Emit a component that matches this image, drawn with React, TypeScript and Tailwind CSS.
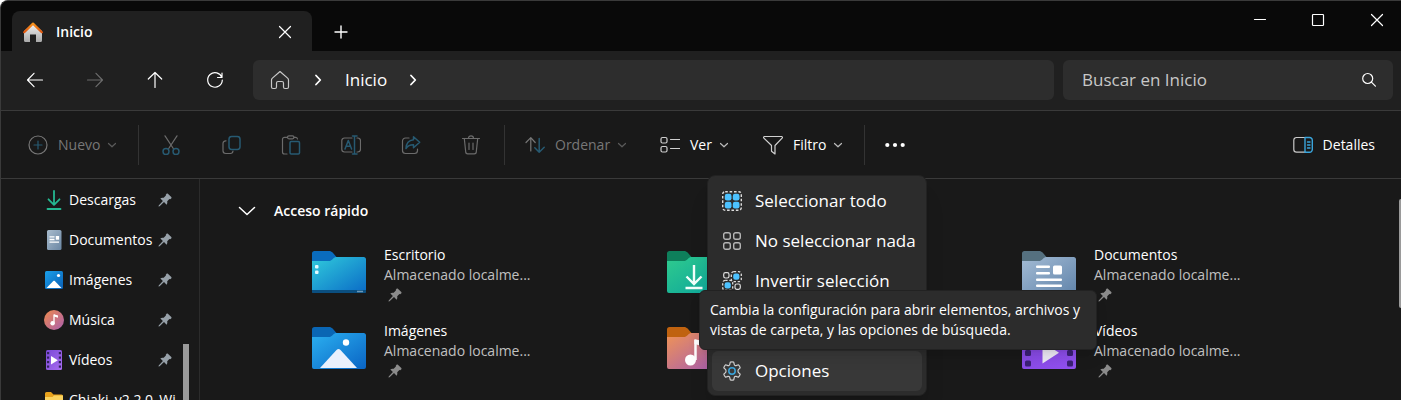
import type { ReactNode } from "react";

type IconProps = { className?: string };

const stroke = {
  fill: "none",
  stroke: "currentColor",
  strokeWidth: 1.2,
  strokeLinecap: "round",
  strokeLinejoin: "round",
} as const;

function Icon({ children, className = "" }: { children: ReactNode; className?: string }) {
  return (
    <svg viewBox="0 0 20 20" className={`size-5 shrink-0 ${className}`} aria-hidden="true" {...stroke}>
      {children}
    </svg>
  );
}

const DIM = "#275a72";
const BLUE = "#4cc2ff";

function HomeColor() {
  return (
    <svg viewBox="0 0 20 20" className="size-5 shrink-0" aria-hidden="true">
      <defs>
        <linearGradient id="wall" x1="0" y1="0" x2="0" y2="1">
          <stop offset="0" stopColor="#f3f3f3" />
          <stop offset="1" stopColor="#a9a9a9" />
        </linearGradient>
        <linearGradient id="roof" x1="0" y1="0" x2="0" y2="1">
          <stop offset="0" stopColor="#f7931e" />
          <stop offset="1" stopColor="#e0560f" />
        </linearGradient>
      </defs>
      <path d="M1 9 10 1.500 19 9v9.500a1.500 1.500 0 0 1-1.500 1.500H13v-7.500H7V20H2.500A1.500 1.500 0 0 1 1 18.500z" fill="url(#wall)" />
      <path d="M1.200 10.200 10 1.600l8.800 8.600" fill="none" stroke="url(#roof)" strokeWidth="2.200" strokeLinecap="round" strokeLinejoin="round" />
    </svg>
  );
}

const Close = () => <Icon><path d="m4.500 4.500 11 11m0-11-11 11" /></Icon>;
const Plus = () => <Icon><path d="M10 4v12M4 10h12" strokeWidth="1.400" /></Icon>;
const Minimize = () => <Icon><path d="M4.500 9.500h11" /></Icon>;
const Maximize = () => <Icon><rect x="4.500" y="4.500" width="11" height="11" rx="0.800" /></Icon>;
const Back = () => <Icon><path d="M17.500 10h-15M9 3.300 2.500 10 9 16.700" /></Icon>;
const Forward = () => <Icon><path d="M2.500 10h15M11 3.300 17.500 10 11 16.700" /></Icon>;
const Up = () => <Icon><path d="M10 17.500v-15M3.300 9 10 2.500 16.700 9" /></Icon>;
const Refresh = () => (
  <Icon><path d="M16.900 7.500A7.300 7.300 0 1 0 17.300 10M17 3v4.500h-4.500" /></Icon>
);
const Home = () => (
  <Icon className="text-[#c9c9c9]">
    <path d="m10 1.500 7.600 6.600c.6.500.9 1.200.9 1.900v7a1.500 1.500 0 0 1-1.500 1.500h-2a1.500 1.500 0 0 1-1.500-1.500v-4A1.500 1.500 0 0 0 12 11.500H8A1.500 1.500 0 0 0 6.500 13v4A1.500 1.500 0 0 1 5 18.500H3A1.500 1.500 0 0 1 1.500 17v-7c0-.7.3-1.400.9-1.900z" />
  </Icon>
);
const Crumb = () => <Icon><path d="m8 5.500 4.300 4.500L8 14.500" strokeWidth="1.800" /></Icon>;
const Search = () => (
  <Icon><circle cx="8.700" cy="8.500" r="5" /><path d="m12.400 12.200 4 4" /></Icon>
);
const Chevron = () => (
  <svg viewBox="0 0 10 10" className="size-[10px] shrink-0 opacity-70" aria-hidden="true" {...stroke}>
    <path d="m1.500 3.500 3.500 3.300 3.500-3.300" />
  </svg>
);
const NewIcon = () => (
  <Icon><circle cx="10" cy="10" r="9" /><path d="M10 6v8M6 10h8" stroke={DIM} /></Icon>
);
const Cut = () => (
  <Icon>
    <path d="m4 .800 8.300 12.700M16 .800 7.700 13.500" />
    <g stroke={DIM} strokeWidth="1.500"><circle cx="5" cy="16.500" r="3" /><circle cx="15" cy="16.500" r="3" /></g>
  </Icon>
);
const Copy = () => (
  <Icon>
    <path d="M5 5.800A2.700 2.700 0 0 0 2 8.500v7.300A2.700 2.700 0 0 0 4.700 18.500h4.600A2.700 2.700 0 0 0 12 16" />
    <rect x="8" y="1.500" width="11" height="13" rx="2.700" stroke={DIM} strokeWidth="1.500" />
  </Icon>
);
const Paste = () => (
  <Icon>
    <path d="M6.500 2.300h-3A2 2 0 0 0 1.500 4.300V17a2 2 0 0 0 2 2H6M13 2.300h1.800a2 2 0 0 1 1.700 1.700" />
    <rect x="6.500" y=".800" width="6.500" height="3" rx="1.500" />
    <rect x="9" y="6.500" width="9.500" height="12.500" rx="1.200" stroke={DIM} strokeWidth="1.500" />
  </Icon>
);
const Rename = () => (
  <Icon>
    <path d="M11 3H3.500A2.700 2.700 0 0 0 .800 5.700v8.600A2.700 2.700 0 0 0 3.500 17H11M16 3h.800a2.700 2.700 0 0 1 2.700 2.700v8.600a2.700 2.700 0 0 1-2.700 2.700H16" />
    <path d="m4 14 3.300-8.500L10.600 14M5 11.300h4.600M13.500 1v18M11.500 1h4.500M11.500 19h4.500" stroke={DIM} strokeWidth="1.500" />
  </Icon>
);
const Share = () => (
  <Icon>
    <path d="M8 3H4.500A3 3 0 0 0 1.500 6v9.500a3 3 0 0 0 3 3h9a3 3 0 0 0 3-3V14" />
    <path d="m12.500 1.800 6.200 5.500-6.200 5.500V9.800c-3.800-.1-5.800 1-7.500 3.700.2-5.200 2.800-8.200 7.500-8.700z" stroke={DIM} strokeWidth="1.500" />
  </Icon>
);
const Trash = () => (
  <Icon>
    <path d="M1.500 3.500h17M7.500 3.300a2.500 2.500 0 0 1 5 0M3.300 3.500l1.400 13.300A2 2 0 0 0 6.700 18.800h6.600a2 2 0 0 0 2-2l1.400-13.300M8 8v6.500M12 8v6.500" />
  </Icon>
);
const Sort = () => (
  <Icon>
    <path d="M5.800 16V2.800M1 7.500l4.800-4.800 4.400 4.800" />
    <path d="M14.200 3.500v13.700M9.800 12.800l4.400 4.400 5-5" stroke={DIM} strokeWidth="1.500" />
  </Icon>
);
const ViewIcon = () => (
  <Icon className="text-[#d0d0d0]">
    <rect x="1" y="2.500" width="6" height="5.500" rx="1.500" /><rect x="1" y="11.500" width="6" height="5.500" rx="1.500" />
    <path d="M10.500 4.500h9M10.500 13.500h9" />
  </Icon>
);
const Filter = () => (
  <Icon className="text-[#d0d0d0]">
    <path d="M1.500 1.500h17c.9 0 1.200 1 .6 1.600L12 10.500V19l-3.500-2.800v-5.700L.900 3.100c-.6-.6-.3-1.600.6-1.600z" />
  </Icon>
);
const Dots = () => (
  <svg viewBox="0 0 20 20" className="size-5" fill="currentColor" aria-hidden="true">
    <circle cx="2.300" cy="10" r="2.100" /><circle cx="10" cy="10" r="2.100" /><circle cx="17.700" cy="10" r="2.100" />
  </svg>
);
const Details = () => (
  <Icon className="text-[#c9c9c9]">
    <path d="M12 2.500H3.500A2.700 2.700 0 0 0 .800 5.200v9.300a2.700 2.700 0 0 0 2.700 2.700H12" />
    <path d="M12 2.500h4.600a2.700 2.700 0 0 1 2.700 2.700v9.300a2.700 2.700 0 0 1-2.700 2.700H12zM14.500 7h2.500M14.500 10h2.500M14.500 13h2.500" stroke="#3aa5dc" strokeWidth="1.400" />
  </Icon>
);

const SelectAll = () => (
  <Icon className="text-[#dddddd]">
    <rect x=".700" y=".700" width="18.600" height="18.600" rx="2.500" strokeDasharray="2.600 1.800" strokeWidth="1.400" strokeLinecap="butt" />
    <g fill={BLUE} stroke="none">
      <rect x="2.800" y="2.800" width="6.700" height="6.700" rx="2.200" /><rect x="10.800" y="2.800" width="6.700" height="6.700" rx="2.200" />
      <rect x="2.800" y="10.800" width="6.700" height="6.700" rx="2.200" /><rect x="10.800" y="10.800" width="6.700" height="6.700" rx="2.200" />
    </g>
  </Icon>
);
const SelectNone = () => (
  <Icon className="text-[#b5b5b5]">
    <g strokeWidth="1.400">
      <rect x="1.700" y="1.700" width="6.600" height="6.600" rx="2" /><rect x="11.700" y="1.700" width="6.600" height="6.600" rx="2" />
      <rect x="1.700" y="11.700" width="6.600" height="6.600" rx="2" /><rect x="11.700" y="11.700" width="6.600" height="6.600" rx="2" />
    </g>
  </Icon>
);
const Invert = () => (
  <Icon className="text-[#dddddd]">
    <rect x="1.700" y="1.700" width="5.300" height="5.300" rx="1.700" /><rect x="13" y="13" width="5.300" height="5.300" rx="1.700" />
    <g strokeDasharray="2.400 1.700" strokeLinecap="butt" strokeWidth="1.300">
      <rect x="9.300" y=".700" width="10" height="10" rx="2.500" /><rect x=".700" y="9.300" width="10" height="10" rx="2.500" />
    </g>
    <g fill={BLUE} stroke="none"><rect x="11.200" y="2.600" width="6.200" height="6.200" rx="2.200" /><rect x="2.600" y="11.200" width="6.200" height="6.200" rx="2.200" /></g>
  </Icon>
);
const Gear = () => (
  <Icon className="text-[#d0d0d0]">
    <path d="M8.300 1.200C9.400.900 10.600.900 11.700 1.200L12.300 3.700C12.400 4.200 13.400 4.800 14 4.600L16.500 3.800C17.300 4.700 17.900 5.700 18.200 6.800L16.300 8.700C15.900 9.100 15.900 10.900 16.300 11.300L18.200 13.200C17.900 14.300 17.300 15.300 16.500 16.200L14 15.400C13.400 15.200 12.400 15.800 12.300 16.300L11.700 18.800C10.600 19.100 9.400 19.100 8.300 18.800L7.700 16.300C7.600 15.800 6.600 15.200 6 15.400L3.500 16.200C2.700 15.300 2.100 14.300 1.800 13.200L3.700 11.300C4.100 10.900 4.100 9.100 3.700 8.700L1.800 6.800C2.100 5.700 2.700 4.700 3.500 3.800L6 4.600C6.600 4.800 7.600 4.200 7.700 3.700z" />
    <circle cx="10" cy="10" r="3.200" stroke="#3aa5dc" strokeWidth="1.500" />
  </Icon>
);

function Pin({ className = "" }: IconProps) {
  return (
    <svg viewBox="0 0 14 14" className={`size-[14px] shrink-0 ${className}`} fill="currentColor" aria-hidden="true">
      <path d="M8.600.800c.4-.5.900-.5 1.300-.1l3.400 3.400c.4.400.4.900-.1 1.300l-1 .8-.8-.1-2.200 2.200c.3 1.300.1 2.400-.6 3.400L6 9.100 1.600 13.300.500 13.500l.2-1.100L4.900 8 2.300 5.400c1-.7 2.100-.900 3.400-.6l2.200-2.200-.1-.8z" />
    </svg>
  );
}

const SideDownload = () => (
  <svg viewBox="0 0 20 20" className="size-5 shrink-0" fill="none" stroke="#25b891" strokeWidth="1.800" strokeLinecap="round" strokeLinejoin="round" aria-hidden="true">
    <path d="M10 1v13.500M4.500 9.300 10 14.800l5.500-5.500M3.500 19h13" />
  </svg>
);
const SideDocument = () => (
  <svg viewBox="0 0 20 20" className="size-5 shrink-0" aria-hidden="true">
    <defs><linearGradient id="sdoc" x1="0" y1="0" x2="1" y2="1"><stop stopColor="#a9bccd" /><stop offset="1" stopColor="#6a86a3" /></linearGradient></defs>
    <rect x="3" width="14.500" height="20" rx="1.500" fill="url(#sdoc)" />
    <path d="M5.500 6.800h5M5.500 9.500h5M5.500 12.200h9.500" stroke="#fff" strokeWidth="1.300" />
    <rect x="11.800" y="6" width="3.300" height="3.700" fill="#fff" />
  </svg>
);
const SidePicture = () => (
  <svg viewBox="0 0 20 20" className="size-5 shrink-0" aria-hidden="true">
    <defs><linearGradient id="spic" x1="0" y1="0" x2="1" y2="1"><stop stopColor="#1aa0ea" /><stop offset="1" stopColor="#0a5fb5" /></linearGradient></defs>
    <rect x="1" y="1" width="18" height="18" rx="1.500" fill="url(#spic)" />
    <path d="M2.500 18 9.300 11c.5-.5 1-.5 1.500 0L17.500 18z" fill="#fff" />
    <circle cx="14.500" cy="5.500" r="1.600" fill="#fff" />
  </svg>
);
const SideMusic = () => (
  <svg viewBox="0 0 20 20" className="size-5 shrink-0" aria-hidden="true">
    <defs><linearGradient id="smus" x1="0" y1="0" x2="1" y2="1"><stop stopColor="#ee8a4c" /><stop offset="1" stopColor="#ab5fb0" /></linearGradient></defs>
    <circle cx="10" cy="10" r="10" fill="url(#smus)" />
    <path d="M10 4.500v9" stroke="#fff" strokeWidth="1.300" /><path d="M10 4.300 14 5.500v2.200L10 6.500z" fill="#fff" />
    <circle cx="8.600" cy="13.300" r="2.200" fill="#fff" />
  </svg>
);
const SideVideo = () => (
  <svg viewBox="0 0 20 20" className="size-5 shrink-0" aria-hidden="true">
    <defs><linearGradient id="svid" x1="0" y1="0" x2="1" y2="1"><stop stopColor="#7a49d6" /><stop offset="1" stopColor="#a86cf0" /></linearGradient></defs>
    <rect x="2" width="16" height="20" rx="1.500" fill="url(#svid)" />
    <g fill="#33235e">
      <rect x="3" y="2" width="2.200" height="2.200" /><rect x="3" y="6.500" width="2.200" height="2.200" /><rect x="3" y="11" width="2.200" height="2.200" /><rect x="3" y="15.500" width="2.200" height="2.200" />
      <rect x="14.800" y="2" width="2.200" height="2.200" /><rect x="14.800" y="6.500" width="2.200" height="2.200" /><rect x="14.800" y="11" width="2.200" height="2.200" /><rect x="14.800" y="15.500" width="2.200" height="2.200" />
    </g>
    <path d="M7 6v8.500l6.800-4.200z" fill="#fff" />
  </svg>
);
const SideFolder = () => (
  <svg viewBox="0 0 20 20" className="size-5 shrink-0" aria-hidden="true">
    <path d="M1 3.500A1.500 1.500 0 0 1 2.500 2H7l2.500 2.500h8A1.500 1.500 0 0 1 19 6v4H1z" fill="#e8a21c" />
    <path d="M1 7h7.500L10 5.500h9V17a1.500 1.500 0 0 1-1.500 1.500h-15A1.500 1.500 0 0 1 1 17z" fill="#fbd35f" />
  </svg>
);

type FolderKind = "desktop" | "downloads" | "documents" | "pictures" | "music" | "videos";

const folderColors: Record<FolderKind, [string, string, string]> = {
  desktop: ["#0a6cbd", "#30cbdc", "#0a6ac6"],
  downloads: ["#0e7f5b", "#2fcb8e", "#0ba39b"],
  documents: ["#55707f", "#a3bbd4", "#6285ab"],
  pictures: ["#0a66b4", "#2bb0f0", "#0a64c4"],
  music: ["#c0620f", "#f09455", "#a45ab4"],
  videos: ["#5b2bb0", "#8347e0", "#9250f0"],
};

const folderArt: Record<FolderKind, ReactNode> = {
  desktop: (
    <>
      <path d="M0 39h54v1.500a1.500 1.500 0 0 1-1.500 1.500h-51A1.500 1.500 0 0 1 0 40.500z" fill="#0b4f80" />
      <rect x="3" y="14" width="3.500" height="3.500" rx="1" fill="#e2fbff" /><rect x="3" y="19.500" width="3.500" height="3.500" rx="1" fill="#e2fbff" />
      <path d="M45 40.500h6" stroke="#6b98b8" strokeWidth="1.500" />
    </>
  ),
  downloads: <path d="M27 14v18M19.500 25.500 27 33l7.500-7.500M18.500 37h17" fill="none" stroke="#f2fffb" strokeWidth="2.400" />,
  documents: (
    <g fill="#fff">
      <rect x="14" y="14.500" width="14" height="2.500" rx="1" /><rect x="14" y="21" width="14" height="2.500" rx="1" />
      <rect x="14" y="27.500" width="26" height="2.500" rx="1" /><rect x="14" y="33.500" width="26" height="2.500" rx="1" />
      <rect x="31" y="14.500" width="9" height="9" rx="1.500" />
    </g>
  ),
  pictures: (
    <>
      <path d="M8 41 24.500 23c1.300-1.400 2.700-1.400 4 0L45 41z" fill="#eaf1fd" /><circle cx="34" cy="15.500" r="3.200" fill="#fff" />
    </>
  ),
  music: (
    <>
      <path d="M28.500 13v20" stroke="#fff" strokeWidth="2.500" /><path d="M27.500 12 37 14.500v5L27.500 17z" fill="#fff" /><circle cx="23.500" cy="33" r="5.500" fill="#fff" />
    </>
  ),
  videos: (
    <>
      <g fill="#3b2076">
        <rect x="3" y="13" width="6" height="6" rx="1.500" /><rect x="3" y="23" width="6" height="6" rx="1.500" /><rect x="3" y="33.500" width="6" height="6" rx="1.500" />
        <rect x="45" y="13" width="6" height="6" rx="1.500" /><rect x="45" y="23" width="6" height="6" rx="1.500" /><rect x="45" y="33.500" width="6" height="6" rx="1.500" />
      </g>
      <path d="M20.500 15v21.500L37 25.700z" fill="#eeeaf6" />
    </>
  ),
};

function Folder({ kind }: { kind: FolderKind }) {
  const [tab, from, to] = folderColors[kind];
  const id = `folder-${kind}`;
  return (
    <svg viewBox="0 0 54 42" className="mt-1.5 h-[42px] w-[54px] shrink-0" aria-hidden="true">
      <defs>
        <linearGradient id={id} x1="0" y1="0" x2="1" y2="1"><stop stopColor={from} /><stop offset="1" stopColor={to} /></linearGradient>
      </defs>
      <path d="M0 2.500A2.500 2.500 0 0 1 2.500 0H17c1.500 0 2.600.500 3.600 1.600L24.500 6V16H0z" fill={tab} />
      <path d="M0 10h16.500c1.500 0 2.500-.4 3.500-1.300l1.500-1.400C22.500 6.400 23.500 6 25 6H51.500A2.500 2.500 0 0 1 54 8.500V40a2 2 0 0 1-2 2H2a2 2 0 0 1-2-2z" fill={`url(#${id})`} />
      {folderArt[kind]}
    </svg>
  );
}

const sideItems = [
  { label: "Descargas", icon: <SideDownload />, pinned: true },
  { label: "Documentos", icon: <SideDocument />, pinned: true },
  { label: "Imágenes", icon: <SidePicture />, pinned: true },
  { label: "Música", icon: <SideMusic />, pinned: true },
  { label: "Vídeos", icon: <SideVideo />, pinned: true },
  { label: "Chiaki_v2.2.0_Wi", icon: <SideFolder />, pinned: false },
];

const folders: { kind: FolderKind; name?: string }[] = [
  { kind: "desktop", name: "Escritorio" },
  { kind: "downloads" },
  { kind: "documents", name: "Documentos" },
  { kind: "pictures", name: "Imágenes" },
  { kind: "music" },
  { kind: "videos", name: "Vídeos" },
];

const fileActions = [
  { label: "Cortar", icon: <Cut /> },
  { label: "Copiar", icon: <Copy /> },
  { label: "Pegar", icon: <Paste /> },
  { label: "Cambiar nombre", icon: <Rename /> },
  { label: "Compartir", icon: <Share /> },
  { label: "Eliminar", icon: <Trash /> },
];

const menuItems = [
  { label: "Seleccionar todo", icon: <SelectAll /> },
  { label: "No seleccionar nada", icon: <SelectNone /> },
  { label: "Invertir selección", icon: <Invert /> },
];

const Divider = () => <div className="h-10 w-px shrink-0 bg-[#333333]" />;

function ToolButton({ icon, label, className }: { icon: ReactNode; label: string; className: string }) {
  return (
    <button className={`flex h-10 shrink-0 items-center text-sm ${className}`}>
      {icon}
      <span className="mr-[7px] ml-2.5">{label}</span>
      <Chevron />
    </button>
  );
}

function TitleBar() {
  return (
    <header className="flex h-[50px] shrink-0 bg-[#090909]">
      <div className="mt-2.5 ml-[11px] flex w-[300px] items-center rounded-t-lg bg-[#202020] pt-px pr-[17px] pl-[11px]">
        <HomeColor />
        <h1 className="ml-[13px] flex-1 text-sm font-semibold">Inicio</h1>
        <button aria-label="Cerrar pestaña"><Close /></button>
      </div>
      <button aria-label="Nueva pestaña" className="mt-2.5 flex w-[58px] items-center justify-center pt-px"><Plus /></button>
      <div className="ml-auto flex h-[37px]">
        <button aria-label="Minimizar" className="flex w-[58px] items-center justify-center"><Minimize /></button>
        <button aria-label="Maximizar" className="flex w-[58px] items-center justify-center"><Maximize /></button>
        <button aria-label="Cerrar" className="flex w-[54px] items-center justify-center pl-1.5"><Close /></button>
      </div>
    </header>
  );
}

function NavBar() {
  return (
    <div className="flex h-[59px] shrink-0 items-center bg-[#202020] pr-2 pb-px pl-1">
      <nav aria-label="Historial" className="mr-2 flex">
        <button aria-label="Atrás" className="flex h-10 w-[60px] items-center justify-center"><Back /></button>
        <button aria-label="Adelante" disabled className="flex h-10 w-[60px] items-center justify-center text-[#6b6b6b]"><Forward /></button>
        <button aria-label="Arriba" className="flex h-10 w-[60px] items-center justify-center"><Up /></button>
        <button aria-label="Actualizar" className="flex h-10 w-[60px] items-center justify-center"><Refresh /></button>
      </nav>
      <div className="flex h-10 min-w-0 flex-1 items-center rounded-md bg-[#2d2d2d] pl-[17px]">
        <Home />
        <span className="mr-[17px] ml-[18px]"><Crumb /></span>
        <a href="#inicio" className="mr-4 text-[17px]">Inicio</a>
        <Crumb />
      </div>
      <form role="search" className="ml-[9px] flex h-10 w-[330px] items-center rounded-md bg-[#2d2d2d] pr-3.5 pl-[19px]">
        <input aria-label="Buscar en Inicio" placeholder="Buscar en Inicio" className="min-w-0 flex-1 bg-transparent text-[17px] outline-none placeholder:text-[#c8c8c8]" />
        <button type="button" aria-label="Buscar"><Search /></button>
      </form>
    </div>
  );
}

function MoreMenu() {
  return (
    <div className="absolute top-full right-[-3px] z-10 mt-2.5 flex h-[221px] w-[220px] flex-col rounded-lg border border-[#222222] bg-[#2c2c2c] px-1 pt-[5px] pb-1 shadow-xl" role="menu">
      {menuItems.map((item) => (
        <button key={item.label} role="menuitem" className="flex h-10 shrink-0 items-center gap-[13px] rounded-md px-2.5 text-[17px] whitespace-nowrap">
          {item.icon}
          {item.label}
        </button>
      ))}
      <button role="menuitem" aria-describedby="options-tip" className="mt-auto flex h-10 shrink-0 items-center gap-[13px] rounded-md bg-[#383838] px-2.5 text-[17px]">
        <Gear />
        Opciones
      </button>
      <div id="options-tip" role="tooltip" className="absolute top-[114px] left-[-9px] w-[398px] rounded-md border border-[#222222] bg-[#2c2c2c] px-2.5 py-[9px] text-sm leading-5 whitespace-nowrap shadow-lg">
        Cambia la configuración para abrir elementos, archivos y
        <br />
        vistas de carpeta, y las opciones de búsqueda.
      </div>
    </div>
  );
}

function Toolbar() {
  return (
    <div className="flex h-[69px] shrink-0 items-center border-y border-[#3a3a3a]">
      <ToolButton icon={<NewIcon />} label="Nuevo" className="w-[137px] pl-[27px] text-[#777777]" />
      <Divider />
      <div className="flex pr-[3px] pl-0.5 text-[#6b6b6b]">
        {fileActions.map((action) => (
          <button key={action.label} aria-label={action.label} disabled className="flex h-10 w-[60px] items-center justify-center">
            {action.icon}
          </button>
        ))}
      </div>
      <Divider />
      <ToolButton icon={<Sort />} label="Ordenar" className="w-[135px] pl-5 text-[#777777]" />
      <ToolButton icon={<ViewIcon />} label="Ver" className="w-[103px] pl-5" />
      <ToolButton icon={<Filter />} label="Filtro" className="w-[121px] pl-5" />
      <Divider />
      <div className="relative flex">
        <button aria-label="Ver más" aria-expanded="true" className="flex h-10 w-[59px] items-center justify-center"><Dots /></button>
        <MoreMenu />
      </div>
      <button className="mr-[26px] ml-auto flex h-10 items-center gap-2.5 text-sm">
        <Details />
        Detalles
      </button>
    </div>
  );
}

function Sidebar() {
  return (
    <aside className="flex w-[199px] shrink-0 border-r border-[#2b2b2b]">
      <ul className="w-[182px] overflow-hidden pt-px pl-[43px]">
        {sideItems.map((item) => (
          <li key={item.label}>
            <a href="#carpeta" className="flex h-10 items-center text-sm whitespace-nowrap">
              {item.icon}
              <span className="ml-[5px] w-[89px]">{item.label}</span>
              {item.pinned && <Pin className="text-[#97a1a9]" />}
            </a>
          </li>
        ))}
      </ul>
      <div className="mt-[165px] w-1.5 bg-[#9a9a9a]" />
    </aside>
  );
}

function Content() {
  return (
    <main className="flex min-w-0 flex-1">
      <section className="min-w-0 flex-1 pt-3">
        <button className="flex h-10 items-center pl-[38px]">
          <svg viewBox="0 0 18 10" className="h-2.5 w-[18px]" aria-hidden="true" {...stroke} strokeWidth="1.500">
            <path d="m1.500 1.500 7.500 7 7.500-7" />
          </svg>
          <h2 className="ml-[18px] text-sm font-semibold">Acceso rápido</h2>
        </button>
        <ul className="grid grid-cols-[repeat(auto-fill,355px)] gap-y-4 pt-3.5 pl-28">
          {folders.map((folder) => (
            <li key={folder.kind} className="flex h-[60px] gap-[18px]">
              <Folder kind={folder.kind} />
              {folder.name && (
                <div className="text-sm leading-5">
                  <h3>{folder.name}</h3>
                  <p className="text-[#c0c0c0]">Almacenado localme...</p>
                  <Pin className="mt-[3px] ml-1 text-[#8b8b8b]" />
                </div>
              )}
            </li>
          ))}
        </ul>
      </section>
      <div className="mt-5 h-[109px] w-0.5 shrink-0 rounded-l bg-[#9a9a9a]" />
    </main>
  );
}

export default function App() {
  return (
    <div className="flex h-screen flex-col overflow-hidden rounded-tl-lg border-t border-l border-[#3a3a3a] bg-[#191919] font-['Open_Sans','Noto_Sans',sans-serif] text-white">
      <TitleBar />
      <NavBar />
      <Toolbar />
      <div className="flex min-h-0 flex-1">
        <Sidebar />
        <Content />
      </div>
    </div>
  );
}
